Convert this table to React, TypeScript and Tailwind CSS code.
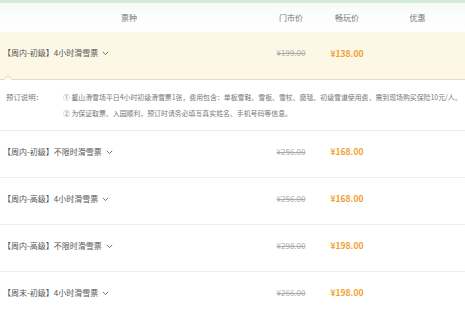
const font = { fontFamily: '"Noto Sans CJK SC", "Noto Sans", sans-serif' }

type Ticket = { name: string; market: string; price: string }

const tickets: Ticket[] = [
  { name: '【周内-初级】4小时滑雪票', market: '¥199.00', price: '¥138.00' },
  { name: '【周内-初级】不限时滑雪票', market: '¥256.00', price: '¥168.00' },
  { name: '【周内-高级】4小时滑雪票', market: '¥256.00', price: '¥168.00' },
  { name: '【周内-高级】不限时滑雪票', market: '¥298.00', price: '¥198.00' },
  { name: '【周末-初级】4小时滑雪票', market: '¥266.00', price: '¥198.00' },
]

function Chevron() {
  return (
    <svg width="7" height="5" viewBox="0 0 7 5" className="ml-[4px] mt-[1px]">
      <path d="M0.8 0.8 L3.5 3.6 L6.2 0.8" fill="none" stroke="#777" strokeWidth="1" />
    </svg>
  )
}

function Row({ t, active }: { t: Ticket; active?: boolean }) {
  return (
    <div
      className={
        'grid h-[47px] grid-cols-[258px_66px_46px_95px] items-center pb-[5px] ' +
        (active ? 'bg-[#fdf8e6]' : 'border-b border-[#ececec] bg-white')
      }
    >
      <div className="flex items-center pl-[3px] text-[8px] text-[#555]">
        {t.name}
        <Chevron />
      </div>
      <div className="text-center text-[8px] text-[#aaa] line-through">{t.market}</div>
      <div className="text-center text-[8.5px] font-bold text-[#f0a030]">{t.price}</div>
      <div />
    </div>
  )
}

export default function App() {
  return (
    <div style={font} className="h-[310px] w-[465px] overflow-hidden border-t-[3px] border-[#d3ead7] bg-white">
      <div className="grid h-[29px] grid-cols-[258px_66px_46px_95px] items-center bg-gradient-to-b from-[#f7fcf8] to-white text-center text-[8px] text-[#777]">
        <div>票种</div>
        <div>门市价</div>
        <div>畅玩价</div>
        <div>优惠</div>
      </div>
      <Row t={tickets[0]} active />
      <div className="relative border-t border-[#e6dcbc] border-b border-b-[#ececec] pt-[9px] pb-[9px]">
        <div className="absolute -top-[4px] left-[5px] h-[6px] w-[6px] rotate-45 border-l border-t border-[#e6dcbc] bg-white" />
        <div className="flex text-[7.4px] leading-[16px] text-[#777]">
          <div className="w-[63px] shrink-0 pl-[6px]">预订说明：</div>
          <div className="whitespace-nowrap text-[6.9px]">
            <div>① 鳌山滑雪场平日4小时初级滑雪票1张，费用包含：单板雪鞋、雪板、雪杖、魔毯、初级雪道使用费，需到现场购买保险10元/人。</div>
            <div>② 为保证取票、入园顺利，预订时请务必填写真实姓名、手机号码等信息。</div>
          </div>
        </div>
      </div>
      {tickets.slice(1).map((t, i) => (
        <Row key={i} t={t} />
      ))}
    </div>
  )
}
